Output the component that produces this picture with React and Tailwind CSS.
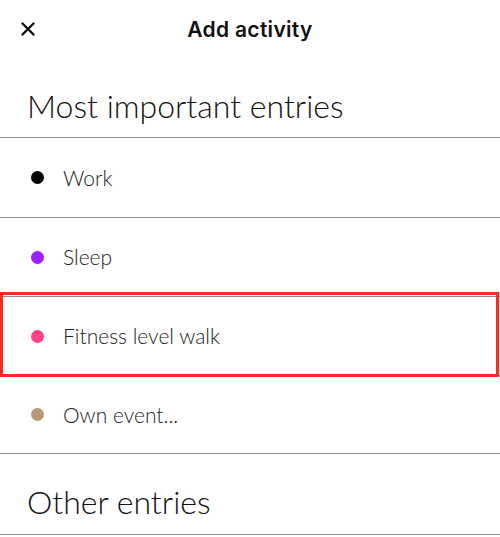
export default function App() {
    const rows = [
        {label: "Work", color: "bg-black", h: "h-[80px]"},
        {label: "Sleep", color: "bg-[#9b22ff]", h: "h-[79px]"},
        {label: "Fitness level walk", color: "bg-[#ff4287]", h: "h-[79px]"},
        {label: "Own event...", color: "bg-[#b99a78]", h: "h-[78px]"},
    ]

    return <div className="relative w-[500px] h-[537px] bg-white overflow-hidden" style={{fontFamily: "Lato, sans-serif"}}>
        {/* top bar */}
        <div className="relative flex items-center justify-center h-[59px]">
            <button className="absolute left-[19px] top-[20px] w-[18px] h-[18px] flex items-center justify-center">
                <svg width="14" height="14" viewBox="0 0 14 14" fill="none" stroke="#111" strokeWidth="2.4" strokeLinecap="round">
                    <path d="M1.5 1.5 L12.5 12.5 M12.5 1.5 L1.5 12.5" />
                </svg>
            </button>
            <h1 className="text-[21px] font-semibold tracking-[0.3px] text-[#111]" style={{fontFamily: "Inter, sans-serif"}}>Add activity</h1>
        </div>

        <div className="h-[79px] flex items-center pl-[27px] pt-[15px] border-b border-[#8e8e8e]">
            <h2 className="text-[32px] font-light text-[#111]">Most important entries</h2>
        </div>

        {rows.map((r) => (
            <div key={r.label} className={`${r.h} flex items-center border-b border-[#8e8e8e]`}>
                <span className={`ml-[31px] w-[13px] h-[13px] rounded-full ${r.color}`}></span>
                <span className="ml-[19px] text-[21px] font-light text-[#222]">{r.label}</span>
            </div>
        ))}

        <div className="h-[81px] flex items-center pl-[27px] pt-[15px] border-b border-[#8e8e8e]">
            <h2 className="text-[32px] font-light text-[#111]">Other entries</h2>
        </div>

        {/* highlight box */}
        <div className="absolute left-0 top-[292px] w-[499px] h-[85px] border-[3px] border-[#ff2a1f]"></div>
    </div>
}
